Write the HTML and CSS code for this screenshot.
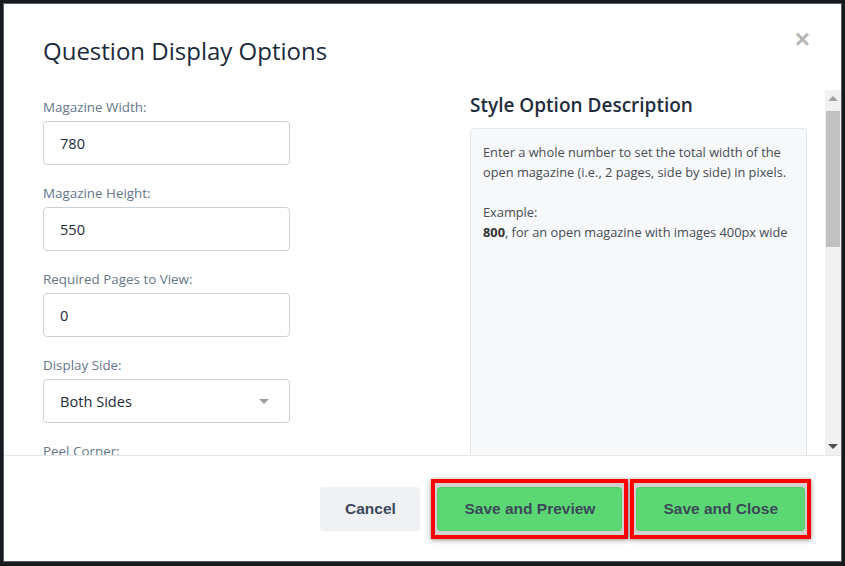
FILE: index.html
```html
<!DOCTYPE html>
<html lang="en">
<head>
    <meta charset="UTF-8">
    <meta name="viewport" content="width=device-width, initial-scale=1.0">
    <title>Question Display Options</title>
    <link rel="stylesheet" href="styles.css">
</head>
<body>
<div class="modal">
    <div class="modal-header">
        <h2>Question Display Options</h2>
        <span class="close">&times;</span>
    </div>

    <div class="modal-body">
        <div class="content">
            <div class="fields">
                <label>Magazine Width:</label>
                <div class="input">780</div>

                <label>Magazine Height:</label>
                <div class="input">550</div>

                <label>Required Pages to View:</label>
                <div class="input">0</div>

                <label>Display Side:</label>
                <div class="input select">Both Sides <span class="caret"></span></div>

                <label>Peel Corner:</label>
            </div>

            <div class="describe">
                <h3>Style Option Description</h3>
                <div class="panel">
                    <p>Enter a whole number to set the total width of the open magazine (i.e., 2 pages, side by side) in pixels.</p>
                    <p class="gap">Example:<br><b>800</b>, for an open magazine with images 400px wide</p>
                </div>
            </div>
        </div>

        <div class="scrollbar">
            <div class="sb-btn up"></div>
            <div class="thumb"></div>
            <div class="sb-btn down"></div>
        </div>
    </div>

    <div class="modal-footer">
        <button class="btn cancel">Cancel</button>
        <div class="hl"><button class="btn save">Save and Preview</button></div>
        <div class="hl"><button class="btn save">Save and Close</button></div>
    </div>
</div>
</body>
</html>
```

FILE: styles.css
```css
body {
    margin: 0;
    padding: 0;
    background-color: #15181c;
    font-family: "Open Sans", "Noto Sans", sans-serif;
    overflow: hidden;
}

.modal {
    margin: 3px;
    border: 1px solid #5a5d61;
    height: 557px;
    background-color: #fff;
    display: flex;
    flex-direction: column;
}

.modal-header {
    height: 86px;
    box-sizing: border-box;
    padding: 31px 31px 0 39px;
    display: flex;
    justify-content: space-between;
    align-items: flex-start;
}

.modal-header h2 {
    margin: 0;
    font-size: 24px;
    line-height: 32px;
    font-weight: 400;
    color: #1b2a3b;
}

.close {
    margin-top: -11px;
    font-family: "Liberation Sans", Arial, sans-serif;
    font-size: 26px;
    font-weight: bold;
    color: #b5b5b5;
}

.modal-body {
    height: 365px;
    display: flex;
}

.content {
    flex: 1;
    overflow: hidden;
    padding: 0 18px 0 39px;
    display: grid;
    grid-template-columns: 247px 337px;
    column-gap: 180px;
    align-items: start;
}

.fields {
    padding-top: 8px;
    display: flex;
    flex-direction: column;
}

.fields label {
    font-size: 13.4px;
    line-height: 18px;
    color: #64778b;
    margin-bottom: 5px;
}

.input {
    height: 44px;
    box-sizing: border-box;
    border: 1px solid #ccd1d6;
    border-radius: 4px;
    padding: 0 16px;
    display: flex;
    align-items: center;
    font-size: 14.6px;
    color: #1e2b3a;
    margin-bottom: 19px;
}

.select {
    justify-content: space-between;
    padding-right: 20px;
}

.caret {
    width: 0;
    height: 0;
    border-left: 5px solid transparent;
    border-right: 5px solid transparent;
    border-top: 5px solid #9aa0a6;
}

.describe {
    padding-top: 3px;
}

.describe h3 {
    margin: 0 0 11px;
    font-size: 19px;
    line-height: 24px;
    font-weight: 600;
    color: #1f2d3d;
}

.panel {
    height: 400px;
    background-color: #f7f8fa;
    border: 1px solid #e2e6ea;
    border-radius: 4px;
    padding: 13px 12px;
}

.panel p {
    margin: 0;
    font-size: 12.8px;
    line-height: 20px;
    color: #474c54;
}

.panel p.gap {
    margin-top: 20px;
}

.panel b {
    color: #333;
}

.scrollbar {
    width: 16px;
    background-color: #f1f1f1;
    display: flex;
    flex-direction: column;
    align-items: center;
}

.sb-btn {
    height: 17px;
    width: 16px;
    display: flex;
    align-items: center;
    justify-content: center;
}

.sb-btn.up::before {
    content: "";
    border-left: 5px solid transparent;
    border-right: 5px solid transparent;
    border-bottom: 5px solid #a3a3a3;
}

.sb-btn.down {
    margin-top: auto;
}

.sb-btn.down::before {
    content: "";
    border-left: 5px solid transparent;
    border-right: 5px solid transparent;
    border-top: 5px solid #505050;
}

.thumb {
    width: 14px;
    height: 136px;
    margin-top: 4px;
    background-color: #c1c1c1;
}

.modal-footer {
    flex: 1;
    border-top: 1px solid #e6e6e6;
    display: flex;
    justify-content: flex-end;
    align-items: center;
    padding-right: 30px;
}

.btn {
    height: 44px;
    border: none;
    border-radius: 4px;
    padding: 0 27px;
    font-family: "Liberation Sans", Arial, sans-serif;
    font-size: 15.5px;
    font-weight: bold;
    color: #3b4858;
}

.cancel {
    width: 100px;
    padding: 0;
    background-color: #eff1f4;
    margin-right: 9px;
}

.hl {
    border: 4px solid #ff0000;
    padding: 4px 2px;
    background-color: #d2d2d2;
    box-shadow: 0 1px 5px rgba(0, 0, 0, 0.45);
    margin-left: 2px;
}

.save {
    background-color: #5bd873;
    box-shadow: inset 0 0 0 1px rgba(0, 0, 0, 0.06);
    display: block;
}
```
